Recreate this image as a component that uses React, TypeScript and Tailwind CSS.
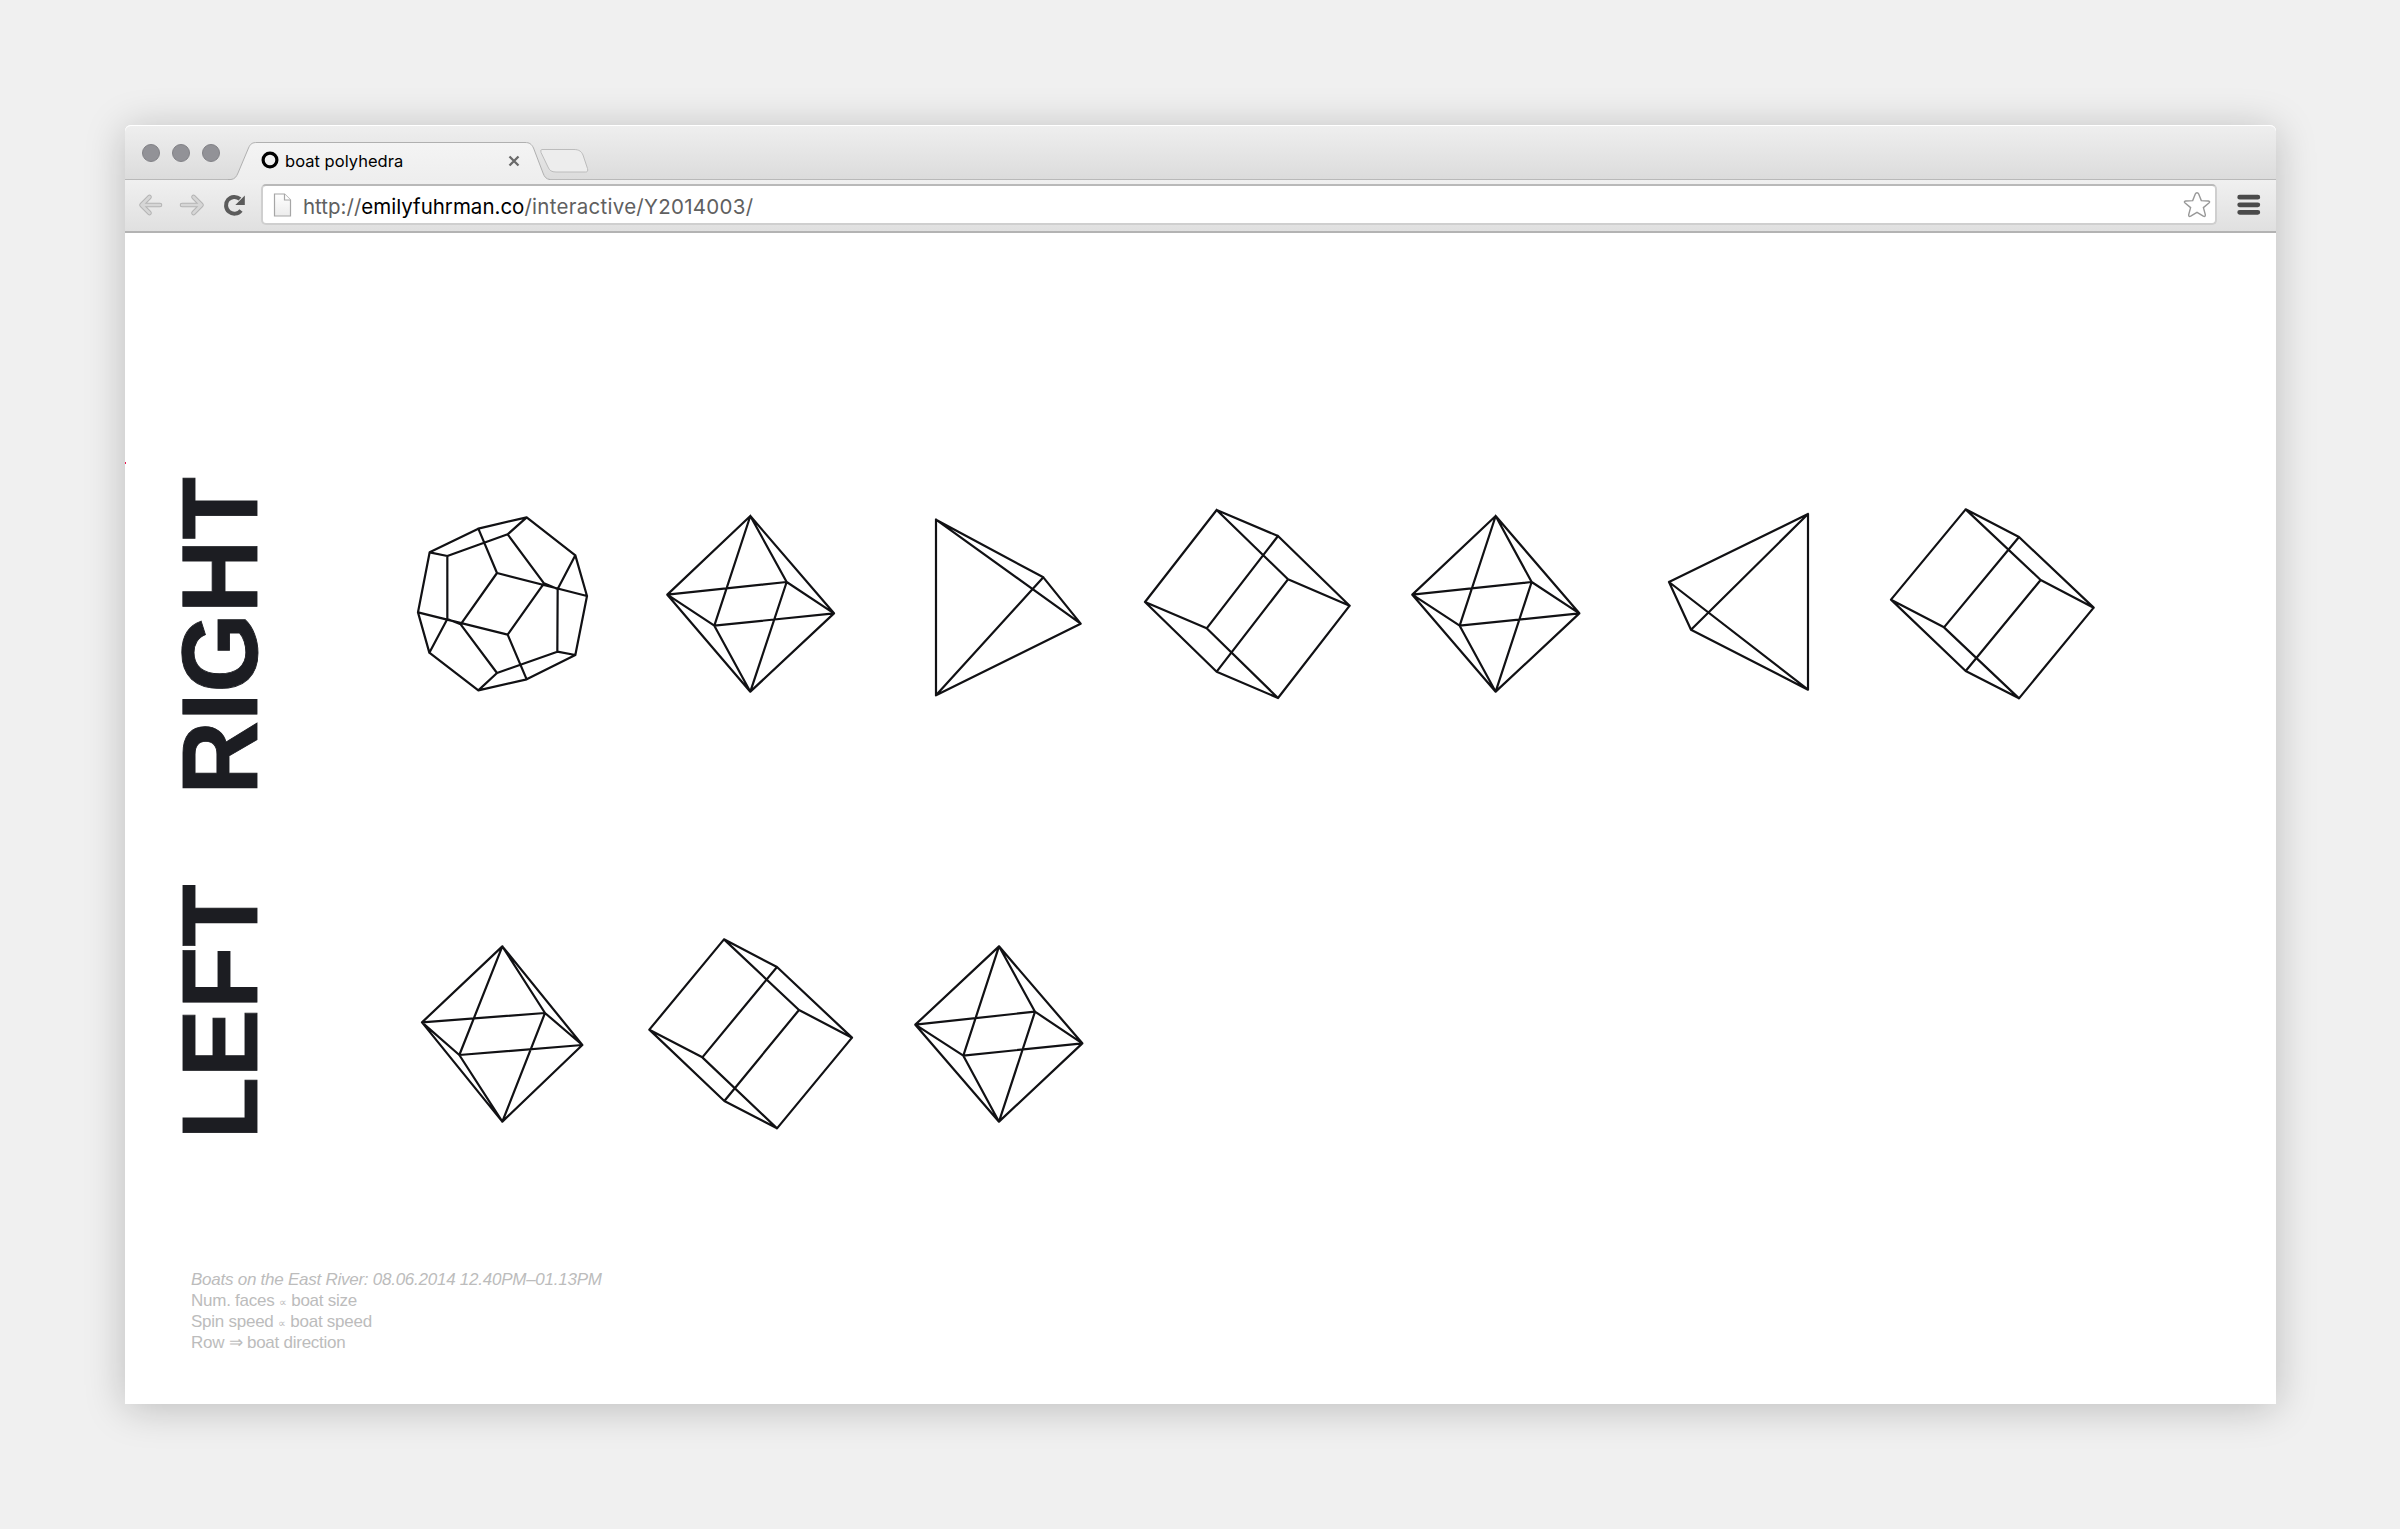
import React from "react";

type Point = [number, number];
type Edge = [number, number];

interface Solid {
  name: string;
  center: Point;
  points: Point[];
  edges: Edge[];
}

const TETRA: Edge[] = [[0, 1], [0, 2], [0, 3], [1, 2], [1, 3], [2, 3]];
const CUBE: Edge[] = [
  [0, 1], [1, 2], [2, 3], [3, 0],
  [4, 5], [5, 7], [7, 6], [6, 4],
  [0, 4], [1, 5], [2, 7], [3, 6],
];
const OCTA: Edge[] = [
  [0, 2], [0, 3], [0, 4], [0, 5],
  [1, 2], [1, 3], [1, 4], [1, 5],
  [2, 4], [2, 5], [3, 4], [3, 5],
];
const DODECA: Edge[] = [
  [0, 1], [1, 2], [2, 3], [3, 4], [4, 0],
  [0, 5], [5, 9], [5, 8], [8, 19], [4, 7], [7, 13], [7, 8],
  [1, 6], [6, 9], [6, 12], [2, 10], [3, 11], [10, 14], [10, 13],
  [11, 14], [11, 12], [12, 15], [14, 16], [16, 17], [17, 18],
  [18, 19], [19, 15], [15, 16], [17, 13], [18, 9],
];

const rightRow: Solid[] = [
  {
    name: "dodecahedron",
    center: [306, 312],
    points: [
      [380, 52], [235, 86], [89, 157], [142, 168], [323, 103],
      [526, 166], [291, 219], [432, 250], [473, 267], [561, 288],
      [54, 337], [142, 357], [182, 373], [323, 404], [88, 458],
      [291, 519], [235, 571], [380, 538], [526, 465], [472, 455],
    ],
    edges: DODECA,
  },
  {
    name: "octahedron",
    center: [1050, 312],
    points: [[1051, 48], [1051, 575], [802, 284], [1302, 340], [1160, 246], [943, 377]],
    edges: OCTA,
  },
  {
    name: "tetrahedron",
    center: [297, 312],
    points: [[108, 59], [108, 586], [430, 232], [542, 371]],
    edges: TETRA,
  },
  {
    name: "cube",
    center: [1041, 312],
    points: [[950, 30], [1134, 108], [1349, 317], [1164, 238], [735, 306], [920, 385], [950, 515], [1134, 594]],
    edges: CUBE,
  },
  {
    name: "octahedron",
    center: [345, 312],
    points: [[347, 48], [347, 575], [97, 284], [598, 340], [455, 246], [239, 377]],
    edges: OCTA,
  },
  {
    name: "tetrahedron",
    center: [1089, 312],
    points: [[1284, 42], [1284, 569], [867, 246], [933, 389]],
    edges: TETRA,
  },
  {
    name: "cube",
    center: [426, 342],
    points: [[347, 58], [507, 141], [731, 353], [572, 270], [123, 329], [282, 412], [347, 543], [507, 625]],
    edges: CUBE,
  },
];

const leftRow: Solid[] = [
  {
    name: "octahedron",
    center: [306, 342],
    points: [[307, 79], [307, 605], [66, 307], [547, 375], [435, 279], [178, 405]],
    edges: OCTA,
  },
  {
    name: "cube",
    center: [1050, 342],
    points: [[972, 58], [1131, 141], [1356, 353], [1197, 270], [748, 329], [907, 412], [973, 543], [1131, 625]],
    edges: CUBE,
  },
  {
    name: "octahedron",
    center: [297, 342],
    points: [[297, 79], [297, 605], [46, 314], [547, 370], [405, 275], [190, 407]],
    edges: OCTA,
  },
];

function Polyhedron({ solid }: { solid: Solid }) {
  const [cx, cy] = solid.center;
  const d = solid.edges
    .map(([a, b]) => `M${solid.points[a].join(" ")}L${solid.points[b].join(" ")}`)
    .join("");
  return (
    <svg
      className="h-[220px] w-[248px] shrink-0"
      viewBox={`${cx - 372} ${cy - 330} 744 660`}
      role="img"
      aria-label={solid.name}
    >
      <path d={d} fill="none" stroke="#111114" strokeWidth="6.600" strokeLinecap="round" />
    </svg>
  );
}

function Row({ label, labelOffset, solids }: { label: string; labelOffset: string; solids: Solid[] }) {
  return (
    <section className="flex h-[280px] items-center">
      <div className={`flex h-[430px] w-[253px] shrink-0 items-center pl-[33px] ${labelOffset}`}>
        <h2 className="w-[124px] rotate-180 scale-y-[0.945] text-center text-[108px] leading-[124px] font-bold text-[#1c1d22] [-webkit-text-stroke:0.9px_#1c1d22] [writing-mode:vertical-rl]">
          {label}
        </h2>
      </div>
      <div className="grid w-[1738px] grid-cols-7">
        {solids.map((s, i) => (
          <Polyhedron key={i} solid={s} />
        ))}
      </div>
    </section>
  );
}

function Tab() {
  return (
    <div className="relative ml-[7px] h-[55px] w-[322px]">
      <svg className="absolute inset-0 h-[55px] w-[322px]" viewBox="228 125 322 55">
        <defs>
          <linearGradient id="tabFill" x1="0" y1="0" x2="0" y2="1">
            <stop offset="0" stopColor="#f4f4f4" />
            <stop offset="1" stopColor="#eeeeee" />
          </linearGradient>
        </defs>
        <path
          d="M231 179.500C235 179 236.500 176.500 238 173L248.500 148C250.500 143.500 252.500 142.500 257 142.500H525C529.500 142.500 531.500 144 533.500 148L543 173C544.500 177 546 178.500 549 179.500V181H231Z"
          fill="url(#tabFill)"
        />
        <path
          d="M228 179.500H231C235 179 236.500 176.500 238 173L248.500 148C250.500 143.500 252.500 142.500 257 142.500H525C529.500 142.500 531.500 144 533.500 148L543 173C544.500 177 546 179 550 179.500"
          fill="none"
          stroke="#b0b0b0"
        />
      </svg>
      <div className="relative flex h-[55px] items-center pt-[17px] pl-[33px] font-[Inter]">
        <svg className="mb-[3px] h-[18px] w-[18px]" viewBox="0 0 18 18">
          <circle cx="9" cy="9" r="6.900" fill="none" stroke="#000" strokeWidth="3.200" />
        </svg>
        <span className="ml-[6px] w-[223px] text-[16.500px] tracking-[0.03px] text-black">boat polyhedra</span>
        <svg className="mb-px h-[12px] w-[12px]" viewBox="0 0 12 12">
          <path d="M1.500 1.500L10.500 10.500M10.500 1.500L1.500 10.500" stroke="#6a6a6a" strokeWidth="2.300" />
        </svg>
      </div>
    </div>
  );
}

function TitleBar() {
  return (
    <header className="flex h-[55px] shrink-0 rounded-t-[6px] border-b border-[#b9b9b9] bg-linear-to-b from-[#efefef] to-[#dcdcdc] pl-[18px] shadow-[inset_0_1px_0_#fff]">
      <div className="-ml-px flex w-[79px] gap-3 pt-[19px]">
        <i className="size-[18px] rounded-full border border-[#828287] bg-[#929297]" />
        <i className="size-[18px] rounded-full border border-[#828287] bg-[#929297]" />
        <i className="size-[18px] rounded-full border border-[#828287] bg-[#929297]" />
      </div>
      <Tab />
      <svg className="-ml-[12px] h-[54px] w-[52px]" viewBox="538 125 52 54">
        <path
          d="M542 149.500H574C579 149.500 581.500 151.500 583 155L587.500 168.500C588.200 171 587.500 172 585.500 172H556C551.500 172 549.500 170.500 548 167L541 152.500Q540 149.500 542 149.500Z"
          fill="#ededed"
          stroke="#bcbcbc"
        />
      </svg>
    </header>
  );
}

function Toolbar() {
  return (
    <nav className="flex h-[53px] shrink-0 border-b-2 border-[#b3b3b3] bg-linear-to-b from-[#f0f0f0] to-[#e0e0e0] pl-[13px] font-[Inter]">
      <svg className="mt-[13px] h-[24px] w-[112px]" viewBox="138 193 112 24">
        <g fill="none" strokeLinecap="round" strokeLinejoin="round">
          <path d="M149.500 197L141.500 205L149.500 213M142 205H160" stroke="#b4b4b4" strokeWidth="4.600" />
          <path d="M149.500 197L141.500 205L149.500 213M142 205H160" stroke="#d6d6d6" strokeWidth="2.600" />
          <path d="M193.500 197L201.500 205L193.500 213M201 205H182" stroke="#b4b4b4" strokeWidth="4.600" />
          <path d="M193.500 197L201.500 205L193.500 213M201 205H182" stroke="#d6d6d6" strokeWidth="2.600" />
        </g>
        <path d="M241 210.500A8.400 8.400 0 1 1 240 199" fill="none" stroke="#5b5b5b" strokeWidth="4" />
        <path d="M244.800 195.500V205H235.300Z" fill="#5b5b5b" />
      </svg>
      <div className="mt-[4px] ml-[11px] flex h-[41px] w-[1956px] items-center rounded-[5px] border-2 border-[#cfcfcf] border-t-[#b9b9b9] bg-white pr-[4px] pl-[10px]">
        <svg className="mt-px h-[24px] w-[19px]" viewBox="0 0 19 24">
          <defs>
            <linearGradient id="sheet" x1="0" y1="0" x2="0" y2="1">
              <stop offset="0" stopColor="#fff" />
              <stop offset="1" stopColor="#ececec" />
            </linearGradient>
          </defs>
          <path d="M1.500 1H11.500L17.500 7V23H1.500Z" fill="url(#sheet)" stroke="#a6a6a6" strokeWidth="1.200" />
          <path d="M11.500 1V7H17.500" fill="#fff" stroke="#a6a6a6" strokeWidth="1.200" />
        </svg>
        <p className="mt-[4px] ml-[11px] flex-1 text-[20.500px] leading-[34px] text-[#606060]">
          http://<span className="text-black">emilyfuhrman.co</span>
          <span className="tracking-[0.28px]">/interactive/Y2014003/</span>
        </p>
        <svg className="h-[28px] w-[28px]" viewBox="0 0 28 28">
          <path
            d="M14 1.800Q15.200 1.800 15.700 3L18.300 9.600L25.300 10Q27.600 10.400 25.900 12.100L20.400 16.600L22.300 23.600Q22.600 26.200 20.300 25.200L14 21.300L7.700 25.200Q5.400 26.200 5.700 23.600L7.600 16.600L2.100 12.100Q.4 10.400 2.700 10L9.700 9.600L12.300 3Q12.800 1.800 14 1.800Z"
            fill="#fff"
            stroke="#989898"
            strokeWidth="1.400"
          />
        </svg>
      </div>
      <svg className="mt-[14px] ml-[19px] h-[22px] w-[25px]" viewBox="2236 194 25 22">
        <path
          d="M2239.700 197.200H2257.800M2239.700 204.800H2257.800M2239.700 212.300H2257.800"
          stroke="#4a4a4a"
          strokeWidth="4.800"
          strokeLinecap="round"
        />
      </svg>
    </nav>
  );
}

function Legend() {
  return (
    <footer className="grid auto-rows-[21px] pt-[95px] pl-[66px] text-[17px] leading-[21px] tracking-[-0.25px] text-[#bcbcbc]">
      <p className="italic">Boats on the East River: 08.06.2014 12.40PM–01.13PM</p>
      <p>Num. faces <span className="text-[11px] leading-none">∝</span> boat size</p>
      <p>Spin speed <span className="text-[11px] leading-none">∝</span> boat speed</p>
      <p>Row ⇒ boat direction</p>
    </footer>
  );
}

export default function App() {
  return (
    <div className="h-[1529px] w-[2400px] bg-[#f0f0f0] pt-[125px] pl-[125px] font-['Liberation_Sans',sans-serif]">
      <div className="flex h-[1279px] w-[2151px] flex-col rounded-t-[6px] bg-white shadow-[0_4px_40px_rgba(0,0,0,0.22)]">
        <TitleBar />
        <Toolbar />
        <main className="flex-1">
          <div className="flex h-[231px] items-end">
            <i className="h-[2px] w-px bg-[#e8174f]" />
          </div>
          <Row label="RIGHT" labelOffset="pt-[64px]" solids={rightRow} />
          <div className="h-[150px]" />
          <Row label="LEFT" labelOffset="pb-[44px]" solids={leftRow} />
          <Legend />
        </main>
      </div>
    </div>
  );
}
